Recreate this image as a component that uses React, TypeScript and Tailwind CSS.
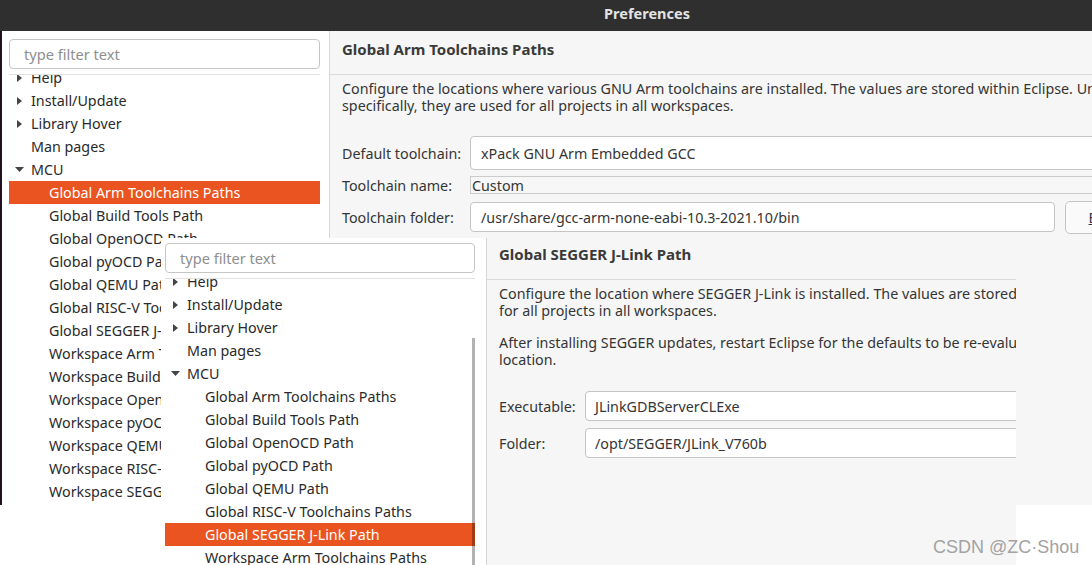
import React from "react";

type Item = { label: string; level: 0 | 1; arrow?: "right" | "down"; selected?: boolean };

const baseItems: Item[] = [
  { label: "Help", level: 0, arrow: "right" },
  { label: "Install/Update", level: 0, arrow: "right" },
  { label: "Library Hover", level: 0, arrow: "right" },
  { label: "Man pages", level: 0 },
  { label: "MCU", level: 0, arrow: "down" },
  { label: "Global Arm Toolchains Paths", level: 1, selected: true },
  { label: "Global Build Tools Path", level: 1 },
  { label: "Global OpenOCD Path", level: 1 },
  { label: "Global pyOCD Path", level: 1 },
  { label: "Global QEMU Path", level: 1 },
  { label: "Global RISC-V Toolchains Paths", level: 1 },
  { label: "Global SEGGER J-Link Path", level: 1 },
  { label: "Workspace Arm Toolchains Paths", level: 1 },
  { label: "Workspace Build Tools Path", level: 1 },
  { label: "Workspace OpenOCD Path", level: 1 },
  { label: "Workspace pyOCD Path", level: 1 },
  { label: "Workspace QEMU Path", level: 1 },
  { label: "Workspace RISC-V Toolchains Paths", level: 1 },
  { label: "Workspace SEGGER J-Link Path", level: 1 },
];

const overlayItems: Item[] = [
  { label: "Help", level: 0, arrow: "right" },
  { label: "Install/Update", level: 0, arrow: "right" },
  { label: "Library Hover", level: 0, arrow: "right" },
  { label: "Man pages", level: 0 },
  { label: "MCU", level: 0, arrow: "down" },
  { label: "Global Arm Toolchains Paths", level: 1 },
  { label: "Global Build Tools Path", level: 1 },
  { label: "Global OpenOCD Path", level: 1 },
  { label: "Global pyOCD Path", level: 1 },
  { label: "Global QEMU Path", level: 1 },
  { label: "Global RISC-V Toolchains Paths", level: 1 },
  { label: "Global SEGGER J-Link Path", level: 1, selected: true },
  { label: "Workspace Arm Toolchains Paths", level: 1 },
  { label: "Workspace Build Tools Path", level: 1 },
];

function Arrow({ dir }: { dir?: "right" | "down" }) {
  if (dir === "right")
    return (
      <svg width="5" height="8" viewBox="0 0 5 8">
        <polygon points="0,0 5,4 0,8" fill="#444" />
      </svg>
    );
  if (dir === "down")
    return (
      <svg width="9" height="5" viewBox="0 0 9 5">
        <polygon points="0,0 9,0 4.5,5" fill="#444" />
      </svg>
    );
  return null;
}

function TreeRow({ item }: { item: Item }) {
  return (
    <div
      className={
        "flex h-[23px] shrink-0 items-center whitespace-nowrap " +
        (item.level === 1 ? "pl-[22px] " : "pl-[4px] ") +
        (item.selected ? "bg-[#e95420] text-white" : "text-[#2a2a2a]")
      }
    >
      <span className="flex h-full w-[12px] items-center justify-center">
        <Arrow dir={item.arrow} />
      </span>
      <span className="ml-[6px]">{item.label}</span>
    </div>
  );
}

function FilterBox() {
  return (
    <div className="flex h-[30px] shrink-0 items-center rounded-[4px] border border-[#c6c6c6] bg-white pl-[14px] text-[14.6px] text-[#8e8e8e]">
      type filter text
    </div>
  );
}

export default function App() {
  return (
    <div className="relative h-[565px] w-[1092px] overflow-hidden bg-white font-['Noto_Sans',sans-serif] text-[14.3px] leading-[17px] text-[#353535]">
      {/* Base window */}
      <div className="flex h-[505px] flex-col overflow-hidden">
        <div className="flex h-[31px] shrink-0 overflow-hidden bg-[#2f2f2f]">
          <div className="w-[1294px] shrink-0 pt-[3px] text-center text-[14.5px] font-bold leading-[20px] text-[#e4e4e4]">
            Preferences
          </div>
        </div>
        <div className="flex min-h-0 flex-1">
          <div className="w-[2px] shrink-0 bg-[#24111e]" />
          {/* Left tree panel */}
          <div className="flex w-[328px] shrink-0 flex-col border-r border-[#d6d6d6] bg-white pl-[7px] pr-[9px] pt-[8px]">
            <FilterBox />
            <div className="mt-[5px] flex min-h-0 flex-1 flex-col overflow-hidden border-t border-[#e2e2e2]">
              <div className="mt-[-9px] flex flex-col">
                {baseItems.map((it) => (
                  <TreeRow key={it.label} item={it} />
                ))}
              </div>
            </div>
          </div>
          {/* Right content panel */}
          <div className="flex min-w-0 flex-1 flex-col overflow-hidden bg-[#f6f6f6]">
            <div className="h-[44px] shrink-0 border-b border-[#dadada] pl-[12px] pt-[8px] text-[15px] font-bold leading-[20px] text-[#3a3a3a]">
              Global Arm Toolchains Paths
            </div>
            <div className="flex flex-col pl-[12px] pt-[5px]">
              <div className="whitespace-nowrap">
                Configure the locations where various GNU Arm toolchains are installed. The values are stored within Eclipse. Unless redefined more
              </div>
              <div className="whitespace-nowrap">specifically, they are used for all projects in all workspaces.</div>
              <div className="mt-[22px] flex h-[34px] items-center">
                <div className="w-[128px] shrink-0 whitespace-nowrap">Default toolchain:</div>
                <div className="flex h-[34px] w-[700px] shrink-0 items-center rounded-[4px] border border-[#c4c4c4] bg-white pl-[10px]">
                  xPack GNU Arm Embedded GCC
                </div>
              </div>
              <div className="mt-[6px] flex h-[18px] items-center">
                <div className="w-[128px] shrink-0 whitespace-nowrap">Toolchain name:</div>
                <div className="flex h-[18px] w-[700px] shrink-0 items-center border border-[#cbcbcb] bg-[#f7f7f7] pl-[1px]">
                  Custom
                </div>
              </div>
              <div className="mt-[6px] flex h-[34px] items-center">
                <div className="w-[128px] shrink-0 whitespace-nowrap">Toolchain folder:</div>
                <div className="flex h-[30px] w-[585px] shrink-0 items-center rounded-[4px] border border-[#c4c4c4] bg-white pl-[10px]">
                  /usr/share/gcc-arm-none-eabi-10.3-2021.10/bin
                </div>
                <div className="ml-[10px] flex h-[33px] w-[108px] shrink-0 items-center justify-center rounded-[5px] border border-[#c4c4c4] bg-[#fafafa]">
                  <span>
                    <span className="underline">B</span>rowse...
                  </span>
                </div>
              </div>
            </div>
          </div>
        </div>
      </div>

      {/* Overlaid second screenshot */}
      <div className="absolute left-[161px] top-[238px] flex h-[327px] w-[855px] overflow-hidden">
        <div className="flex w-[326px] shrink-0 flex-col border-r border-[#d6d6d6] bg-white pl-[4px] pr-[11px] pt-[5px]">
          <FilterBox />
          <div className="relative mt-[5px] flex min-h-0 flex-1 flex-col overflow-hidden border-t border-[#e2e2e2]">
            <div className="mt-[-9px] flex flex-col">
              {overlayItems.map((it) => (
                <TreeRow key={it.label} item={it} />
              ))}
            </div>
            <div className="absolute bottom-0 right-0 top-[59px] w-[3px] bg-black/30" />
          </div>
        </div>
        <div className="flex min-w-0 flex-1 flex-col overflow-hidden bg-[#f6f6f6]">
          <div className="h-[42px] shrink-0 border-b border-[#dadada] pl-[12px] pt-[6px] text-[15px] font-bold leading-[20px] text-[#3a3a3a]">
            Global SEGGER J-Link Path
          </div>
          <div className="flex flex-col pl-[12px] pt-[5px]">
            <div className="whitespace-nowrap">
              Configure the location where SEGGER J-Link is installed. The values are stored within Eclipse. Unless redefined more specifically, they are used
            </div>
            <div className="whitespace-nowrap">for all projects in all workspaces.</div>
            <div className="mt-[15px] whitespace-nowrap">
              After installing SEGGER updates, restart Eclipse for the defaults to be re-evaluated and the new version to be used as the default
            </div>
            <div className="whitespace-nowrap">location.</div>
            <div className="mt-[23px] flex h-[30px] items-center">
              <div className="w-[86px] shrink-0 whitespace-nowrap">Executable:</div>
              <div className="flex h-[30px] w-[600px] shrink-0 items-center rounded-[4px] border border-[#c4c4c4] bg-white pl-[9px]">
                JLinkGDBServerCLExe
              </div>
            </div>
            <div className="mt-[7px] flex h-[30px] items-center">
              <div className="w-[86px] shrink-0 whitespace-nowrap">Folder:</div>
              <div className="flex h-[30px] w-[600px] shrink-0 items-center rounded-[4px] border border-[#c4c4c4] bg-white pl-[9px]">
                /opt/SEGGER/JLink_V760b
              </div>
            </div>
          </div>
        </div>
      </div>

      {/* Watermark */}
      <div className="absolute left-[933px] top-[537px] whitespace-nowrap font-['Liberation_Sans',Arial,sans-serif] text-[18px] leading-[21px] text-[#a3a3a3]">
        CSDN @ZC·Shou
      </div>
    </div>
  );
}
